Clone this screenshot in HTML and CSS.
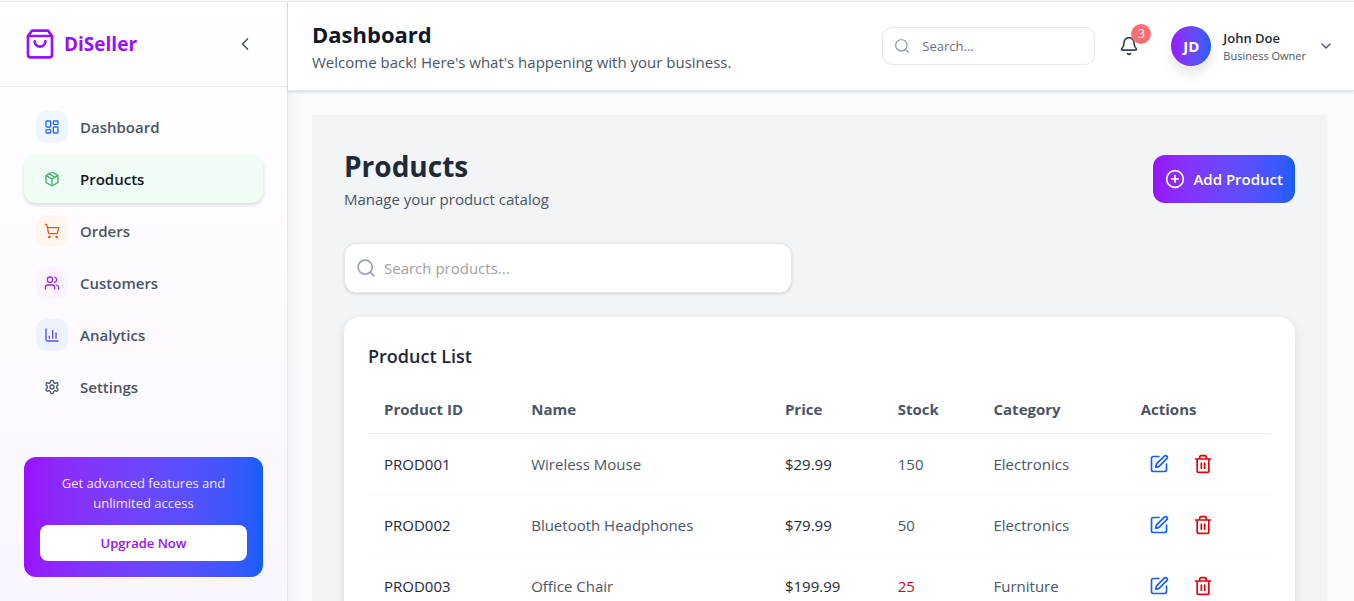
FILE: index.html
```html
<!DOCTYPE html>
<html lang="en">
<head>
<meta charset="utf-8">
<meta name="viewport" content="width=device-width, initial-scale=1">
<title>DiSeller</title>
<link rel="stylesheet" href="styles.css">
</head>
<body>
<svg class="sprite" aria-hidden="true">
  <symbol id="edit" viewBox="0 0 24 24"><path d="M12 3H5a2 2 0 0 0-2 2v14a2 2 0 0 0 2 2h14a2 2 0 0 0 2-2v-7"/><path d="M18.375 2.625a1 1 0 0 1 3 3l-9.013 9.014a2 2 0 0 1-.853.505l-2.873.84a.5.5 0 0 1-.62-.62l.84-2.873a2 2 0 0 1 .506-.852z"/></symbol>
  <symbol id="trash" viewBox="0 0 24 24"><path d="M3 6h18M19 6v14a2 2 0 0 1-2 2H7a2 2 0 0 1-2-2V6M8 6V4a2 2 0 0 1 2-2h4a2 2 0 0 1 2 2v2M10 11v6M14 11v6"/></symbol>
  <symbol id="search" viewBox="0 0 24 24"><circle cx="11" cy="11" r="8.5"/><path d="m21.5 21.5-4.5-4.5"/></symbol>
</svg>
<div class="app">
  <aside class="sidebar">
    <div class="brand">
      <svg class="icon icon-xl" viewBox="0 0 24 24"><path d="M6 2 3 6v14a2 2 0 0 0 2 2h14a2 2 0 0 0 2-2V6l-3-4Z"/><path d="M3 6h18M16 10a4 4 0 0 1-8 0"/></svg>
      <span class="brand-name">DiSeller</span>
      <button class="collapse" type="button" aria-label="Collapse sidebar"><svg class="icon icon-md" viewBox="0 0 24 24"><path d="m15 18-6-6 6-6"/></svg></button>
    </div>
    <nav class="nav">
      <a class="nav-item" href="#"><span class="tile blue"><svg class="icon icon-sm" viewBox="0 0 24 24"><rect x="3" y="3" width="7" height="9" rx="1"/><rect x="14" y="3" width="7" height="5" rx="1"/><rect x="14" y="12" width="7" height="9" rx="1"/><rect x="3" y="16" width="7" height="5" rx="1"/></svg></span>Dashboard</a>
      <a class="nav-item active" href="#" aria-current="page"><span class="tile green"><svg class="icon icon-sm" viewBox="0 0 24 24"><path d="M11 21.73a2 2 0 0 0 2 0l7-4A2 2 0 0 0 21 16V8a2 2 0 0 0-1-1.73l-7-4a2 2 0 0 0-2 0l-7 4A2 2 0 0 0 3 8v8a2 2 0 0 0 1 1.73z"/><path d="M12 22V12M3.29 7 12 12l8.71-5M7.5 4.27l9 5.15"/></svg></span>Products</a>
      <a class="nav-item" href="#"><span class="tile orange"><svg class="icon icon-sm" viewBox="0 0 24 24"><circle cx="8" cy="21" r="1"/><circle cx="19" cy="21" r="1"/><path d="M2.05 2.05h2l2.66 12.42a2 2 0 0 0 2 1.58h9.78a2 2 0 0 0 1.95-1.57l1.65-7.43H5.12"/></svg></span>Orders</a>
      <a class="nav-item" href="#"><span class="tile purple"><svg class="icon icon-sm" viewBox="0 0 24 24"><path d="M16 21v-2a4 4 0 0 0-4-4H6a4 4 0 0 0-4 4v2"/><circle cx="9" cy="7" r="4"/><path d="M22 21v-2a4 4 0 0 0-3-3.87M16 3.13a4 4 0 0 1 0 7.75"/></svg></span>Customers</a>
      <a class="nav-item" href="#"><span class="tile indigo"><svg class="icon icon-sm" viewBox="0 0 24 24"><path d="M3 3v16a2 2 0 0 0 2 2h16M18 17V9M13 17V5M8 17v-3"/></svg></span>Analytics</a>
      <a class="nav-item" href="#"><span class="tile gray"><svg class="icon icon-sm" viewBox="0 0 24 24"><path d="M12.22 2h-.44a2 2 0 0 0-2 2v.18a2 2 0 0 1-1 1.73l-.43.25a2 2 0 0 1-2 0l-.15-.08a2 2 0 0 0-2.73.73l-.22.38a2 2 0 0 0 .73 2.73l.15.1a2 2 0 0 1 1 1.72v.51a2 2 0 0 1-1 1.74l-.15.09a2 2 0 0 0-.73 2.73l.22.38a2 2 0 0 0 2.73.73l.15-.08a2 2 0 0 1 2 0l.43.25a2 2 0 0 1 1 1.73V20a2 2 0 0 0 2 2h.44a2 2 0 0 0 2-2v-.18a2 2 0 0 1 1-1.73l.43-.25a2 2 0 0 1 2 0l.15.08a2 2 0 0 0 2.73-.73l.22-.39a2 2 0 0 0-.73-2.73l-.15-.08a2 2 0 0 1-1-1.74v-.5a2 2 0 0 1 1-1.74l.15-.09a2 2 0 0 0 .73-2.73l-.22-.38a2 2 0 0 0-2.73-.73l-.15.08a2 2 0 0 1-2 0l-.43-.25a2 2 0 0 1-1-1.73V4a2 2 0 0 0-2-2z"/><circle cx="12" cy="12" r="3"/></svg></span>Settings</a>
    </nav>
    <section class="promo">
      <p class="promo-text">Get advanced features and unlimited access</p>
      <button class="promo-button" type="button">Upgrade Now</button>
    </section>
  </aside>
  <div class="main">
    <header class="topbar">
      <div class="topbar-heading">
        <h1 class="topbar-title">Dashboard</h1>
        <p class="subtitle">Welcome back! Here's what's happening with your business.</p>
      </div>
      <label class="top-search"><svg class="icon icon-sm"><use href="#search"/></svg><input type="search" placeholder="Search..." aria-label="Search"></label>
      <button class="bell" type="button" aria-label="Notifications">
        <svg class="icon icon-md" viewBox="0 0 24 24"><path d="M10.27 21a2 2 0 0 0 3.46 0"/><path d="M3.26 15.33A1 1 0 0 0 4 17h16a1 1 0 0 0 .74-1.67C19.41 13.96 18 12.5 18 8A6 6 0 0 0 6 8c0 4.5-1.41 5.96-2.74 7.33"/></svg>
        <span class="badge">3</span>
      </button>
      <button class="profile" type="button">
        <span class="avatar">JD</span>
        <span class="profile-text"><span class="profile-name">John Doe</span><span class="profile-role">Business Owner</span></span>
        <svg class="icon icon-sm" viewBox="0 0 24 24"><path d="m6 9 6 6 6-6"/></svg>
      </button>
    </header>
    <main class="content">
      <div class="page">
        <div class="page-head">
          <div>
            <h2 class="page-title">Products</h2>
            <p class="subtitle">Manage your product catalog</p>
          </div>
          <button class="add" type="button"><svg class="icon icon-md" viewBox="0 0 24 24"><circle cx="12" cy="12" r="10"/><path d="M8 12h8M12 8v8"/></svg>Add Product</button>
        </div>
        <label class="product-search"><svg class="icon icon-md"><use href="#search"/></svg><input type="search" placeholder="Search products..." aria-label="Search products"></label>
        <section class="card">
          <h3 class="card-title">Product List</h3>
          <table class="table">
            <thead><tr><th class="col-id">Product ID</th><th class="col-name">Name</th><th class="col-price">Price</th><th class="col-stock">Stock</th><th class="col-category">Category</th><th>Actions</th></tr></thead>
            <tbody>
              <tr><td class="strong">PROD001</td><td>Wireless Mouse</td><td class="strong">$29.99</td><td>150</td><td>Electronics</td><td><div class="actions"><button class="action edit" type="button" aria-label="Edit PROD001"><svg class="icon icon-md"><use href="#edit"/></svg></button><button class="action delete" type="button" aria-label="Delete PROD001"><svg class="icon icon-md"><use href="#trash"/></svg></button></div></td></tr>
              <tr><td class="strong">PROD002</td><td>Bluetooth Headphones</td><td class="strong">$79.99</td><td>50</td><td>Electronics</td><td><div class="actions"><button class="action edit" type="button" aria-label="Edit PROD002"><svg class="icon icon-md"><use href="#edit"/></svg></button><button class="action delete" type="button" aria-label="Delete PROD002"><svg class="icon icon-md"><use href="#trash"/></svg></button></div></td></tr>
              <tr><td class="strong">PROD003</td><td>Office Chair</td><td class="strong">$199.99</td><td class="low">25</td><td>Furniture</td><td><div class="actions"><button class="action edit" type="button" aria-label="Edit PROD003"><svg class="icon icon-md"><use href="#edit"/></svg></button><button class="action delete" type="button" aria-label="Delete PROD003"><svg class="icon icon-md"><use href="#trash"/></svg></button></div></td></tr>
            </tbody>
          </table>
        </section>
      </div>
    </main>
  </div>
</div>
</body>
</html>
```
FILE: styles.css
```css
*, *::before, *::after { box-sizing: border-box; }
body {
  margin: 0;
  font-family: "Open Sans", "Noto Sans", sans-serif;
  font-size: 15px;
  line-height: 24px;
  color: #1e2939;
  background: #f9fafb;
}
h1, h2, h3, p { margin: 0; }
button, input { font: inherit; color: inherit; }
button { border: 0; padding: 0; background: none; cursor: pointer; }
input { border: 0; outline: 0; background: none; min-width: 0; width: 100%; padding: 0; }
a { color: inherit; text-decoration: none; }
.sprite { display: none; }
.icon { flex: none; display: block; fill: none; stroke: currentColor; stroke-width: 2; stroke-linecap: round; stroke-linejoin: round; }
.icon-sm { width: 16px; height: 16px; }
.icon-md { width: 20px; height: 20px; }
.icon-xl { width: 32px; height: 32px; }

.app { display: flex; height: 100vh; overflow: hidden; padding-top: 1px; }
.sidebar {
  flex: none;
  display: flex;
  flex-direction: column;
  width: 288px;
  border-top: 1px solid #e5e7eb;
  border-right: 1px solid #e5e7eb;
  background: linear-gradient(#ffffff, #faf5ff);
  box-shadow: 0 8px 16px rgba(0, 0, 0, 0.06);
}
.brand { display: flex; align-items: center; gap: 8px; height: 85px; padding: 0 32px 0 24px; border-bottom: 1px solid #e5e7eb; color: #9810fa; }
.brand-name { flex: 1; font-size: 19px; line-height: 28px; font-weight: 700; }
.collapse { color: #4a5565; }
.nav { display: flex; flex-direction: column; gap: 4px; padding: 16px 24px; }
.nav-item { display: flex; align-items: center; gap: 12px; padding: 8px 12px; border-radius: 12px; font-weight: 600; color: #4a5565; }
.nav-item.active { background: #f0fdf4; color: #101828; box-shadow: 0 2px 4px rgba(0, 0, 0, 0.14); }
.tile { display: grid; place-items: center; width: 32px; height: 32px; border-radius: 10px; }
.blue { background: #eff6ff; color: #2b6de8; }
.green { background: #f0fdf4; color: #3cb371; }
.orange { background: #fff7ed; color: #e0571b; }
.purple { background: #fbf3ff; color: #9a2fe8; }
.indigo { background: #eef2ff; color: #5a4ff0; }
.gray { background: #fbfbfd; color: #4a5565; }
.promo { margin: auto 24px 24px; padding: 16px; border-radius: 12px; background: linear-gradient(90deg in oklab, #9810fa, #155dfc); text-align: center; font-size: 13px; line-height: 20px; }
.promo-text { margin-bottom: 12px; color: #f3e8ff; }
.promo-button { width: 100%; padding: 8px; border-radius: 8px; background: #fff; color: #9810fa; font-weight: 600; }

.main { flex: 1; min-width: 0; display: flex; flex-direction: column; }
.topbar { display: flex; align-items: center; height: 90px; flex: none; padding: 0 20px 0 24px; background: #fff; border-top: 1px solid #e5e7eb; border-bottom: 1px solid #e5e7eb; box-shadow: 0 1px 3px rgba(0, 0, 0, 0.14); }
.topbar-heading { flex: 1; min-width: 0; }
.topbar-title { font-size: 22px; line-height: 32px; font-weight: 700; color: #101828; }
.subtitle { color: #4a5565; }
.top-search { display: flex; align-items: center; gap: 12px; width: 213px; height: 38px; padding: 0 11px; border: 1px solid #e5e7eb; border-radius: 10px; color: #99a1af; font-size: 13px; }
.top-search input { color: #364153; }
.top-search input::placeholder { color: #6a7282; opacity: 1; }
.bell { position: relative; margin-left: 24px; color: #364153; }
.badge { position: absolute; top: -12px; right: -12px; width: 20px; height: 20px; border-radius: 50%; background: #fb6f74; color: #fff; font-size: 12px; line-height: 20px; }
.profile { display: flex; align-items: center; gap: 12px; margin-left: 32px; text-align: left; color: #4a5565; }
.avatar { display: grid; place-items: center; width: 40px; height: 40px; border-radius: 50%; background: linear-gradient(90deg in oklab, #9810fa, #155dfc); box-shadow: 0 8px 12px rgba(0, 0, 0, 0.1); color: #fff; font-size: 15px; font-weight: 700; }
.profile-text { display: grid; }
.profile-name { font-size: 13px; line-height: 20px; font-weight: 600; color: #1e2939; }
.profile-role { font-size: 11px; line-height: 16px; }

.content { flex: 1; min-height: 0; padding: 24px 27px 0 24px; overflow: hidden; }
.page { padding: 32px; background: #f3f4f6; }
.page-head { display: flex; justify-content: space-between; align-items: center; margin-bottom: 32px; }
.page-title { margin-bottom: 2px; font-size: 28px; line-height: 38px; font-weight: 700; }
.add { display: flex; align-items: center; gap: 8px; padding: 12px; border-radius: 12px; background: linear-gradient(90deg in oklab, #9810fa, #155dfc); color: #fff; font-weight: 600; }
.product-search { display: flex; align-items: center; gap: 8px; max-width: 448px; height: 50px; margin-bottom: 24px; padding: 0 11px; border: 1px solid #e5e7eb; border-radius: 12px; background: #fff; box-shadow: 0 1px 3px rgba(0, 0, 0, 0.14); color: #99a1af; }
.product-search input { color: #364153; }
.product-search input::placeholder { color: #a1a1a1; opacity: 1; }
.card { padding: 24px; border-radius: 16px; background: #fff; box-shadow: 0 4px 12px rgba(0, 0, 0, 0.1); }
.card-title { margin-bottom: 14px; font-size: 18px; line-height: 30px; font-weight: 600; }
.table { width: 100%; table-layout: fixed; border-collapse: separate; border-spacing: 0; text-align: left; color: #4a5565; }
.table th, .table td { padding: 12px 16px; border-bottom: 1px solid #f9fafb; }
.table th { border-bottom-color: #e5e7eb; font-weight: 700; }
.col-id { width: 16.3%; }
.col-name { width: 28.1%; }
.col-price { width: 12.5%; }
.col-stock { width: 10.6%; }
.col-category { width: 16.3%; }
.table .strong { color: #1e2939; }
.table .low { color: #e7000b; }
.actions { display: flex; gap: 8px; }
.action { padding: 8px; }
.edit { color: #155dfc; }
.delete { color: #e7000b; }
```
